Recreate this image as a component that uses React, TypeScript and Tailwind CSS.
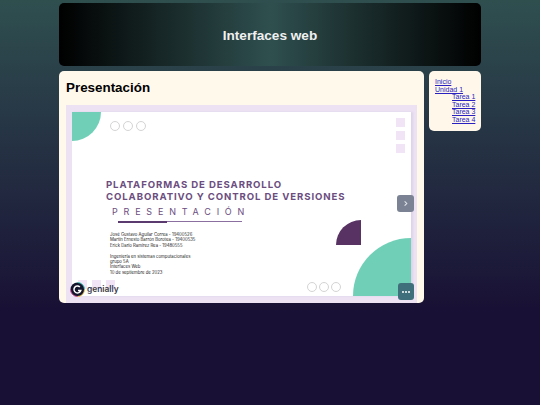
export default function App() {
  const dots = (
    <div className="flex gap-[3px]">
      <span className="w-[10px] h-[10px] rounded-full border border-[#d4d4d4] bg-white" />
      <span className="w-[10px] h-[10px] rounded-full border border-[#d4d4d4] bg-white" />
      <span className="w-[10px] h-[10px] rounded-full border border-[#d4d4d4] bg-white" />
    </div>
  );
  return (
    <div className="min-h-[405px] w-full bg-gradient-to-b from-[#2f4f4f] to-[#191135] to-[76%] pt-[3px] font-['Liberation_Sans',sans-serif] overflow-hidden">
      <div className="w-[422px] mx-auto flex flex-col gap-[5px]">
        <header className="h-[63px] rounded-[5px] bg-[linear-gradient(to_right,#000,#2f4f4f_50%,#000)] flex items-center justify-center pt-[3px]">
          <h1 className="text-[13.6px] font-bold text-[#f0f0f0]">Interfaces web</h1>
        </header>
        <div className="flex items-start gap-[5px]">
          <main className="w-[365px] h-[232px] rounded-[5px] bg-[#fff9ec] px-[7px] overflow-hidden">
            <h2 className="text-[13.4px] leading-[17px] font-bold text-black pt-[8px] pb-[9px]">Presentación</h2>
            <div className="relative w-[351px] h-[198px] bg-[#ece2f4] p-[6px] pt-[7px]">
              <div className="relative w-[339px] h-[184px] bg-white overflow-hidden shadow-[2px_0_2px_#ddd3e8] font-['Inter',sans-serif]">
                <div className="absolute left-0 top-0 w-[29px] h-[29px] bg-[#70d0b7] rounded-br-[29px]" />
                <div className="absolute left-[38px] top-[9px]">{dots}</div>
                <div className="absolute right-[6px] top-[6px] flex flex-col gap-[4px]">
                  <span className="w-[9px] h-[9px] bg-[#f0e4f6]" />
                  <span className="w-[9px] h-[9px] bg-[#f0e4f6]" />
                  <span className="w-[9px] h-[9px] bg-[#f0e4f6]" />
                </div>
                <div className="absolute left-[34px] top-[67px] text-[#6b4d80] font-bold text-[9.6px] leading-[11.5px] tracking-[0.9px] whitespace-nowrap">
                  <div>PLATAFORMAS DE DESARROLLO</div>
                  <div>COLABORATIVO Y CONTROL DE VERSIONES</div>
                </div>
                <div className="absolute left-[40px] top-[94px] text-[#6b4d80] text-[9px] leading-[11px] tracking-[5.8px] whitespace-nowrap">PRESENTACIÓN</div>
                <div className="absolute left-[46px] top-[109px] w-[124px] h-px bg-[#8a6fa0]" />
                <div className="absolute left-[46px] top-[109px] w-[49px] h-[2px] bg-[#5b3a70]" />
                <div className="absolute left-[38px] top-[120px] text-[#222] text-[4.25px] leading-[5.4px] whitespace-nowrap">
                  <div>José Gustavo Aguilar Correa - 19400526</div>
                  <div>Martín Ernesto Barrón Borotea - 19400535</div>
                  <div>Erick Darío Ramírez Rea - 19480555</div>
                  <div className="h-[5.4px]" />
                  <div>Ingeniería en sistemas computacionales</div>
                  <div>grupo 5A</div>
                  <div>Interfaces Web</div>
                  <div>10 de septiembre de 2023</div>
                </div>
                <div className="absolute left-[264px] top-[108px] w-[25px] h-[25px] bg-[#573263] rounded-tl-[25px]" />
                <div className="absolute left-[281px] top-[126px] w-[58px] h-[58px] bg-[#70d0b7] rounded-tl-[58px]" />
                <div className="absolute left-[235px] top-[170px] flex gap-[2px]">
                  <span className="w-[10px] h-[10px] rounded-full border border-[#d4d4d4] bg-white" />
                  <span className="w-[10px] h-[10px] rounded-full border border-[#d4d4d4] bg-white" />
                  <span className="w-[10px] h-[10px] rounded-full border border-[#d4d4d4] bg-white" />
                </div>
                <div className="absolute left-[6px] top-[168px] flex gap-[5px]">
                  <span className="w-[9px] h-[9px] bg-[#f0e4f6]" />
                  <span className="w-[9px] h-[9px] bg-[#f0e4f6]" />
                  <span className="w-[9px] h-[9px] bg-[#f0e4f6]" />
                </div>
              </div>
              <div className="absolute left-[331px] top-[90px] w-[17px] h-[17px] rounded-[3px] bg-[#7b8294] flex items-center justify-center">
                <svg width="7" height="7" viewBox="0 0 8 8" fill="none" stroke="#e5e7eb" strokeWidth="1.2"><path d="M3 1.5 5.5 4 3 6.5" /></svg>
              </div>
              <div className="absolute left-[332px] top-[178px] w-[16px] h-[17px] rounded-[3px] bg-[#3f6f7a] flex items-center justify-center gap-px">
                <span className="w-[2px] h-[2px] rounded-full bg-white" />
                <span className="w-[2px] h-[2px] rounded-full bg-white" />
                <span className="w-[2px] h-[2px] rounded-full bg-white" />
              </div>
              <div className="absolute left-[4px] top-[177px] flex items-center gap-[2px] font-['Inter',sans-serif]">
                <svg width="15" height="15" viewBox="0 0 16 16" fill="none">
                  <circle cx="8" cy="8" r="7.5" fill="#14142c" />
                  <path d="M8 .5a7.5 7.5 0 0 1 7.5 7.5" stroke="#3fd0c0" strokeWidth="1" />
                  <path d="M15.5 8A7.5 7.5 0 0 1 8 15.5" stroke="#f2c84b" strokeWidth="1" />
                  <path d="M8 15.5A7.5 7.5 0 0 1 .5 8" stroke="#d64fa0" strokeWidth="1" />
                  <path d="M10.5 5.3A3.7 3.7 0 1 0 11.5 9H8.5" stroke="#fff" strokeWidth="1.6" />
                </svg>
                <span className="text-[8.4px] leading-[11px] font-semibold text-[#3a3a4a]">genially</span>
              </div>
            </div>
          </main>
          <aside className="w-[52px] h-[60px] rounded-[5px] bg-[#fff8ea] pl-[6px] pt-[7px] text-[7px] leading-[7.6px]">
            <a href="#" className="block text-[#2a1fc0] underline">Inicio</a>
            <a href="#" className="block text-[#2a1fc0] underline">Unidad 1</a>
            <a href="#" className="block text-[#2a1fc0] underline pl-[17px]">Tarea 1</a>
            <a href="#" className="block text-[#2a1fc0] underline pl-[17px]">Tarea 2</a>
            <a href="#" className="block text-[#2a1fc0] underline pl-[17px]">Tarea 3</a>
            <a href="#" className="block text-[#2a1fc0] underline pl-[17px]">Tarea 4</a>
          </aside>
        </div>
      </div>
    </div>
  );
}
